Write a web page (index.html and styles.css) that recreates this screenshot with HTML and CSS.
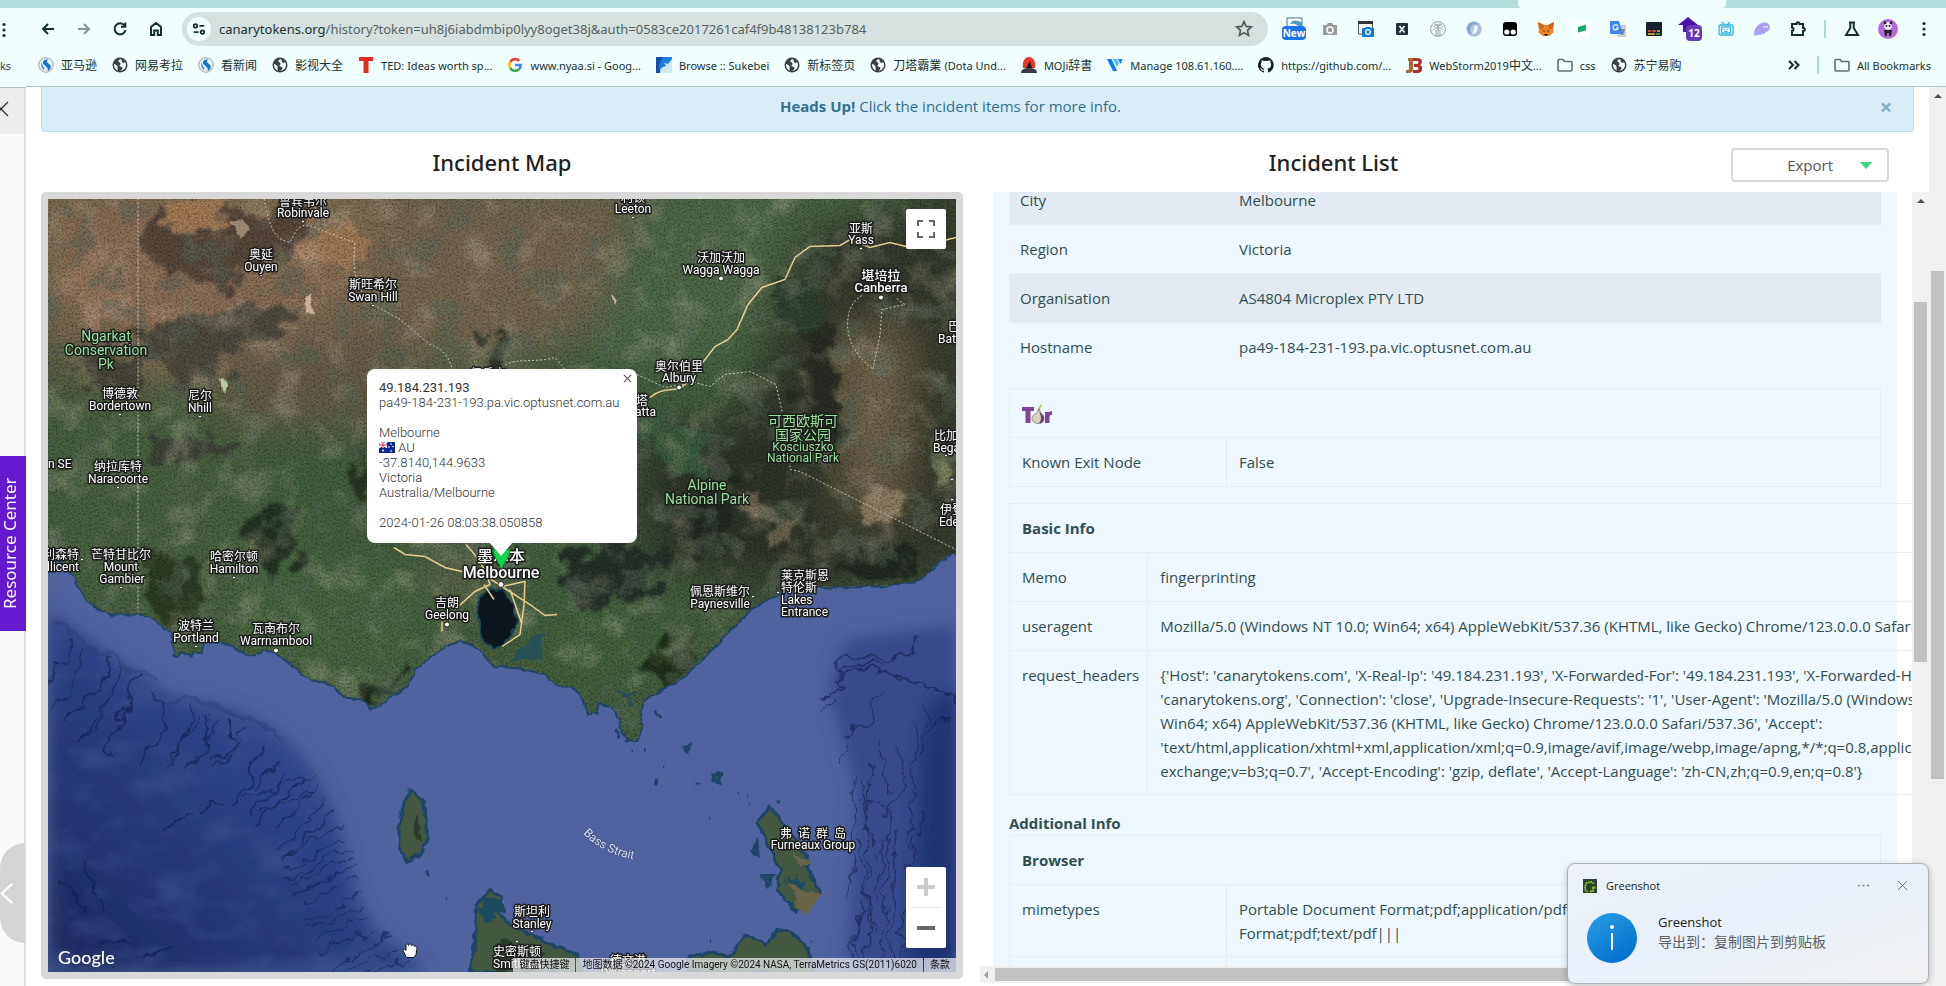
FILE: index.html
```html
<!DOCTYPE html>
<html lang="en">
<head>
<meta charset="utf-8">
<title>Canarytokens history</title>
<link rel="stylesheet" href="styles.css">
</head>
<body>
<svg class="defs" aria-hidden="true">
  <symbol id="globe" viewBox="0 0 16 16"><circle cx="8" cy="8" r="7.500" fill="#3c4043"/><path d="M9 2c-2 .5-3 1.500-2.500 2.500s2 1 2 2.200S7 8 7.500 9s3 .6 3 2-1.500 2-2 3c3-.5 5.500-3 5.500-6 0-1-.3-2-.8-2.800L11 6 10 4.500zM2 7c1 0 3 1 3.500 2.500S5 12 6 13.500C3.500 13 1.800 10 2 7z" fill="#f0fffe"/></symbol>
  <symbol id="swirl" viewBox="0 0 16 16"><circle cx="8" cy="8" r="7.300" fill="#e8f2f4" stroke="#9aa5aa"/><path d="M10 2.500C6 2 4 4.500 5.500 7S11 10 9.500 14c3-1 4-4 2.500-6S7.500 5.500 10 2.500z" fill="#1576c4"/><path d="M4 5c-1.500 2.500-.5 6.500 2 8 1-3-2.500-4-2-8z" fill="#2196d3"/></symbol>
  <symbol id="folder" viewBox="0 0 16 16"><path d="M1 3.500a1 1 0 0 1 1-1h4l1.500 2H14a1 1 0 0 1 1 1V13a1 1 0 0 1-1 1H2a1 1 0 0 1-1-1z" fill="none" stroke="#5b6f6d" stroke-width="1.600"/></symbol>
  <symbol id="dots" viewBox="0 0 16 16"><g fill="#10302e"><circle cx="8" cy="2.500" r="1.600"/><circle cx="8" cy="8" r="1.600"/><circle cx="8" cy="13.500" r="1.600"/></g></symbol>
</svg>

<aside class="peek">
  <div class="peek-chrome">
    <svg class="peek-dots"><use href="#dots"/></svg>
    <span class="peek-mark">ks</span>
  </div>
  <button class="peek-close" aria-label="Close panel"><svg viewBox="0 0 16 16"><path d="M1 1l14 14M15 1L1 15" stroke="#333" stroke-width="1.300"/></svg></button>
  <div class="peek-body">
    <button class="resource">Resource Center</button>
    <button class="peek-back" aria-label="Back"><svg viewBox="0 0 16 26"><path d="M14 2L2 13l12 11" fill="none" stroke="#fff" stroke-width="2.500"/></svg></button>
  </div>
</aside>

<div class="window">
  <header class="chrome">
    <div class="tabstrip"><span class="active-tab"></span></div>
    <nav class="toolbar">
      <button class="ico" aria-label="Back"><svg viewBox="0 0 16 16"><path d="M14 8H3M8 3L3 8l5 5" class="ln"/></svg></button>
      <button class="ico dim" aria-label="Forward"><svg viewBox="0 0 16 16"><path d="M2 8h11M8 3l5 5-5 5" class="ln"/></svg></button>
      <button class="ico" aria-label="Reload"><svg viewBox="0 0 16 16"><path d="M12.500 4.500A5.500 5.500 0 1 0 13.500 9M13.300 1.500v4.300H9" class="ln"/></svg></button>
      <button class="ico" aria-label="Home"><svg viewBox="0 0 16 16"><path d="M3 14V6l5-4 5 4v8H9.800V9.500H6.200V14z" class="ln"/></svg></button>
      <div class="omnibox">
        <button class="site" aria-label="Site information"><svg viewBox="0 0 16 16"><g class="ln"><circle cx="4" cy="4.500" r="2"/><path d="M8.500 4.500H14M2 11.500h5.500"/><circle cx="12" cy="11.500" r="2"/></g></svg></button>
        <span class="url"><b>canarytokens.org</b>/history?token=uh8j6iabdmbip0lyy8oget38j&amp;auth=0583ce2017261caf4f9b48138123b784</span>
        <button class="star" aria-label="Bookmark"><svg viewBox="0 0 16 16"><path d="M8 1.500l1.900 4.200 4.600.5-3.400 3 1 4.500L8 11.400l-4.100 2.300 1-4.500-3.400-3 4.600-.5z" fill="none" stroke="#4d5b5a" stroke-width="1.500"/></svg></button>
      </div>
      <div class="exts">
        <button class="ico" aria-label="Extension, new"><svg viewBox="0 0 24 24"><path d="M5 1h15v10H5z" fill="#fff" stroke="#2c7ba8"/><path d="M8 7c2-5 9-4 12-1v5h-3c0-3-5-5-9-4z" fill="#4b9ac6"/><rect y="9" width="24" height="14" rx="4" fill="#1a73e8"/><text x="12" y="20" class="badge">New</text></svg></button>
        <button class="ico" aria-label="Camera"><svg viewBox="0 0 16 16"><path d="M1 4h3.500L6 2h4l1.500 2H15v10H1z" fill="#9b9b9b"/><circle cx="8" cy="9" r="3" fill="none" stroke="#fff" stroke-width="1.500"/></svg></button>
        <button class="ico" aria-label="Window capture"><svg viewBox="0 0 16 16"><path d="M.5 1h14v12H.5z" fill="#f4f8f8" stroke="#555"/><path d="M0 0h15v3H0z" fill="#333"/><path d="M4 7h3l1-1h4l1 1h3v9H4z" fill="#0b7bd0"/><circle cx="10" cy="11" r="2.300" fill="none" stroke="#fff" stroke-width="1.300"/></svg></button>
        <button class="ico" aria-label="XPath"><svg viewBox="0 0 16 16"><rect x="2" y="2" width="12" height="12" rx="1" fill="#22313a"/><path d="M5.500 5l5 6.500M10.500 5l-5 6.500" stroke="#fff" stroke-width="1.600"/></svg></button>
        <button class="ico" aria-label="Palm"><svg viewBox="0 0 16 16"><g fill="none" stroke="#9a9a9a"><circle cx="8" cy="8" r="7.400"/><path d="M8 5v10M3 6c2-3 4-2 5 0 1-2 3-3 5 0M3 9.500c1-3 4-3 5-2 1-1 4-1 5 2M4.500 3.500C6 2.500 8 3 8 5c0-2 2-2.500 3.500-1.500M6 15V9M10 15V9"/></g></svg></button>
        <button class="ico" aria-label="Orbit"><svg viewBox="0 0 16 16"><circle cx="8" cy="8" r="7.700" fill="#a8bfdf"/><ellipse cx="8" cy="8" rx="3.500" ry="5" fill="#f4fbff" transform="rotate(20 8 8)"/><path d="M3 3c3-3 8-2 10 1-3-1-5 1-5 4s-2 5-4 5C1 10 0 6 3 3z" fill="#5f86c2" opacity=".45"/></svg></button>
        <button class="ico" aria-label="Monkey"><svg viewBox="0 0 16 16"><path d="M4 1h8q3 0 3 3v8q0 3-3 3H4q-3 0-3-3V4q0-3 3-3z" fill="#000"/><circle cx="4.800" cy="11" r="2.600" fill="#fff"/><circle cx="11.200" cy="11" r="2.600" fill="#fff"/></svg></button>
        <button class="ico" aria-label="Wallet fox"><svg viewBox="0 0 16 16"><path d="M0 1l6 3h4l6-3-1 6.500.5 4L11 15H5L.5 11.500l.5-4z" fill="#f08122"/><path d="M0 1l6 3-1 4-4-.5zM16 1l-6 3 1 4 4-.5z" fill="#c9651c"/><path d="M4.500 9l2.500 1-1 1zM11.500 9L9 10l1 1zM6 13h4l-1 2H7z" fill="#3b2a1e"/></svg></button>
        <button class="ico" aria-label="Green flag"><svg viewBox="0 0 16 16"><path d="M0 0h16v16H0z" fill="#fff"/><path d="M4 6l8-2.500v6L4 11.500z" fill="#12b070"/></svg></button>
        <button class="ico" aria-label="Translate"><svg viewBox="0 0 16 16"><path d="M5 4h11v12H8z" fill="#c9ced3"/><path d="M0 0h9l4 13H1a1 1 0 0 1-1-1z" fill="#4285f4"/><path d="M8 5.200a2.600 2.600 0 1 0 .2 1.800H6" fill="none" stroke="#fff" stroke-width="1.200"/><path d="M9 9h6M12 8v1.500M14 9c-.5 3-2 4-3 5M11 11l3 3" stroke="#5b6f8f" fill="none"/></svg></button>
        <button class="ico" aria-label="Keyboard"><svg viewBox="0 0 16 16"><rect y="1" width="16" height="14" rx="1" fill="#15222b"/><path d="M2 10h3M6 10h4" stroke="#e25b4b" stroke-width="1.500"/><path d="M11 10h3M2 13h7" stroke="#f0b949" stroke-width="1.500"/><path d="M10 13h4" stroke="#42b983" stroke-width="1.500"/></svg></button>
        <button class="ico" aria-label="Extension, 12"><svg viewBox="0 0 24 24"><path d="M10 0l10 8h-4v7H5V8H0z" fill="#4a12a8"/><rect x="8" y="8" width="16" height="16" rx="4" fill="#6639b7"/><text x="16" y="20" class="badge">12</text></svg></button>
        <button class="ico" aria-label="TV"><svg viewBox="0 0 16 16"><g fill="none" stroke="#33aee0" stroke-width="1.300"><rect x="1" y="4" width="14" height="10" rx="1.500"/><rect x="3.500" y="6" width="9" height="6"/><path d="M4 1l3 3M12 1L9 4M5.500 8.500l1.500-.5M9 8l1.500.5M6.500 10.500h3"/></g></svg></button>
        <button class="ico" aria-label="Phantom"><svg viewBox="0 0 16 16"><path d="M0 13C0 7 5 1.500 10.500 1.500c4 0 6 3 5 6.500-.5 2-2.500 3-3.500 2.500-1 2-2.500 3-4 2-1.500 2-3 2-3.500.8C3 15 0 15 0 13z" fill="#ab9ff2"/><path d="M10.500 5v2M13 5v2" stroke="#eefcff" stroke-width="1.200"/></svg></button>
        <button class="ico" aria-label="Extensions"><svg viewBox="0 0 16 16"><path d="M2 3h4.500c0-2.500 3-2.500 3 0H13v4c2.500 0 2.500 3 0 3v4H2v-4c2 0 2-3.500 0-3.500z" class="ln"/></svg></button>
        <span class="sep"></span>
        <button class="ico" aria-label="Labs"><svg viewBox="0 0 16 16"><path d="M5 1.500h6M6.300 2v5L2 14h12L9.700 7V2" class="ln"/></svg></button>
        <button class="ico" aria-label="Profile"><svg viewBox="0 0 20 20"><circle cx="10" cy="10" r="10" fill="#b568dc"/><circle cx="10" cy="7" r="3.800" fill="#f5f5f5"/><g fill="#222"><circle cx="7" cy="4" r="1.400"/><circle cx="13" cy="4" r="1.400"/><circle cx="8.500" cy="7" r="1"/><circle cx="11.500" cy="7" r="1"/><path d="M6 11h8l-1 6h-2v-3H9v3H7z"/></g></svg></button>
        <button class="ico" aria-label="Menu"><svg><use href="#dots"/></svg></button>
      </div>
    </nav>
    <nav class="bookmarks">
      <a href="#" class="cjk"><svg><use href="#swirl"/></svg>亚马逊</a>
      <a href="#" class="cjk"><svg><use href="#globe"/></svg>网易考拉</a>
      <a href="#" class="cjk"><svg><use href="#swirl"/></svg>看新闻</a>
      <a href="#" class="cjk"><svg><use href="#globe"/></svg>影视大全</a>
      <a href="#"><svg viewBox="0 0 16 16"><path d="M1 0h14v4h-4.500v12h-5V4H1z" fill="#e62b1e"/></svg>TED: Ideas worth sp...</a>
      <a href="#"><svg viewBox="0 0 16 16"><g fill="none" stroke-width="2.600"><path d="M12.300 3.900A5.700 5.700 0 0 0 3.200 5" stroke="#ea4335"/><path d="M3.200 5a5.700 5.700 0 0 0 0 6" stroke="#fbbc05"/><path d="M3.200 11a5.700 5.700 0 0 0 8.500 1.500" stroke="#34a853"/><path d="M11.700 12.500A5.500 5.500 0 0 0 13.700 8H8" stroke="#4285f4"/></g></svg>www.nyaa.si - Goog...</a>
      <a href="#"><svg viewBox="0 0 16 16"><path d="M0 0h16v16H0z" fill="#1c7fe0"/><path d="M4 16c0-5 2-6 6-7l-2-3 4 1 4-5v14z" fill="#cfe9fb"/><path d="M0 0h7L3 8l1 8H0z" fill="#0c4fae"/></svg>Browse :: Sukebei</a>
      <a href="#" class="cjk"><svg><use href="#globe"/></svg>新标签页</a>
      <a href="#" class="cjk"><svg><use href="#globe"/></svg><span>刀塔霸業 <span class="latin">(Dota Und...</span></span></a>
      <a href="#" class="cjk"><svg viewBox="0 0 16 16"><path d="M2 11C1 4 4 0 8 0s7 4 6 11z" fill="#e8362b"/><path d="M0 16c0-4 4-5 8-5s8 1 8 5z" fill="#3a3a46"/><path d="M5 11l4-7 2 7z" fill="#1c1c22"/></svg><span><span class="latin">MOJi</span>辞書</span></a>
      <a href="#"><svg viewBox="0 0 16 16"><path d="M0 2h4.500L10 14H6z" fill="#007bfc"/><path d="M6 2h4l2 4-2 4z" fill="#51b9ff"/><path d="M11 2h4.500l-2 5z" fill="#007bfc"/></svg>Manage 108.61.160....</a>
      <a href="#"><svg viewBox="0 0 16 16"><path d="M8 0a8 8 0 0 0-2.500 15.600c.4.100.5-.2.500-.4v-1.500c-2.200.5-2.700-1-2.700-1-.4-1-.9-1.200-.9-1.200-.7-.5.100-.5.100-.5.800.1 1.200.8 1.200.8.700 1.200 1.900.9 2.300.7.100-.5.300-.9.500-1.100-1.800-.2-3.600-.9-3.600-4 0-.9.300-1.600.8-2.100-.1-.2-.4-1 .1-2.100 0 0 .7-.2 2.200.8a7.500 7.500 0 0 1 4 0c1.500-1 2.200-.8 2.200-.8.400 1.100.2 1.900.1 2.100.5.500.8 1.200.8 2.100 0 3.100-1.900 3.800-3.700 4 .3.300.6.800.6 1.500v2.200c0 .2.100.5.500.4A8 8 0 0 0 8 0z" fill="#1b1f23"/></svg>https://github.com/...</a>
      <a href="#" class="cjk"><svg viewBox="0 0 16 16"><path d="M2 1h5v11c0 3-2 4-4 4H0v-3h2c1 0 1-1 1-2V4H2z" fill="#b0643a"/><path d="M7 1h4c6 0 6 5 3 7 4 2 3 8-3 8H7v-3h4c2 0 2-3 0-3H8V7h3c2 0 2-3 0-3H7z" fill="#a8322d"/></svg><span><span class="latin">WebStorm2019</span>中文<span class="latin">...</span></span></a>
      <a href="#"><svg><use href="#folder"/></svg>css</a>
      <a href="#" class="cjk"><svg><use href="#globe"/></svg>苏宁易购</a>
      <span class="fill"></span>
      <button class="more" aria-label="More bookmarks"><svg viewBox="0 0 16 16"><path d="M3 4l4 4-4 4M8.500 4l4 4-4 4" class="ln"/></svg></button>
      <span class="sep"></span>
      <a href="#" class="all"><svg><use href="#folder"/></svg>All Bookmarks</a>
    </nav>
  </header>

  <div class="viewport">
    <main class="page">
      <div class="alert"><p><strong>Heads Up!</strong> Click the incident items for more info.</p><button aria-label="Dismiss">×</button></div>
      <div class="columns">
        <section class="left">
          <h2>Incident Map</h2>
          <div class="map">
            <svg class="terrain" viewBox="48 199 908 774" preserveAspectRatio="xMidYMid slice">
              <defs>
                <filter id="rough" x="-5%" y="-5%" width="110%" height="110%"><feTurbulence type="fractalNoise" baseFrequency=".035" numOctaves="5" seed="4" result="n"/><feDisplacementMap in="SourceGraphic" in2="n" scale="60" xChannelSelector="R" yChannelSelector="G"/><feGaussianBlur stdDeviation="1.500"/></filter>
                <filter id="coast"><feTurbulence type="fractalNoise" baseFrequency=".12" numOctaves="2" seed="8" result="n"/><feDisplacementMap in="SourceGraphic" in2="n" scale="6" xChannelSelector="R" yChannelSelector="G"/></filter>
                <filter id="ridge" x="-5%" y="-5%" width="110%" height="110%"><feTurbulence type="fractalNoise" baseFrequency=".05" numOctaves="3" seed="8" result="n"/><feDisplacementMap in="SourceGraphic" in2="n" scale="22" xChannelSelector="R" yChannelSelector="G"/><feGaussianBlur stdDeviation=".7"/></filter>
                <filter id="soft"><feGaussianBlur stdDeviation="22"/></filter>
                <filter id="soft2"><feGaussianBlur stdDeviation="9"/></filter>
                <filter id="grain" x="0" y="0" width="100%" height="100%"><feTurbulence type="fractalNoise" baseFrequency=".5" numOctaves="3" seed="11"/><feColorMatrix values="0 0 0 0 0  0 0 0 0 0  0 0 0 0 0  2 0 0 0 -.8"/></filter>
                <filter id="grainLight" x="0" y="0" width="100%" height="100%"><feTurbulence type="fractalNoise" baseFrequency=".03" numOctaves="6" seed="31"/><feColorMatrix values="0 0 0 0 .66  0 0 0 0 .56  0 0 0 0 .42  0 3 0 0 -1.500"/></filter>
                <filter id="speck" x="0" y="0" width="100%" height="100%"><feTurbulence type="fractalNoise" baseFrequency=".03" numOctaves="6" seed="77"/><feColorMatrix values="0 0 0 0 .1  0 0 0 0 .14  0 0 0 0 .1  0 0 9 0 -5.200"/></filter>
                <filter id="sea" x="0" y="0" width="100%" height="100%"><feTurbulence type="fractalNoise" baseFrequency=".02 .035" numOctaves="4" seed="5"/><feColorMatrix values="0 0 0 0 .05  0 0 0 0 .09  0 0 0 0 .28  0 2 0 0 -.9"/></filter>
                <path id="mainland" d="M48 199H956V553C944 556 940 560 936 565 928 574 924 578 913 582 880 588 850 586 817 587 800 588 792 588 780 593 765 601 757 605 747 613L713 648 680 680 C672 686 664 686 658 691L644 700 640 712 642 728 636 740 628 742 622 730 618 716 C612 706 606 702 598 703L596 712 588 714 584 702C578 690 572 684 566 686L558 686C550 680 548 672 540 673L533 671 520 668 494 666 480 650C474 644 468 641 460 641 448 642 442 650 432 655L415 668C410 676 412 684 402 689L388 698 380 705 372 708 362 699 345 697C336 688 330 682 322 681L310 680C300 674 294 664 284 659L276 652 264 650 255 655 245 654C234 646 224 640 214 640L202 638 201 654 194 652 190 656 182 651 175 655 174 640 172 634C160 622 150 615 138 614L110 614C96 608 88 602 82 592L74 576 62 562 48 556Z"/>
                <clipPath id="land"><use href="#mainland"/></clipPath>
                <linearGradient id="deep" x1="1" y1="0" x2="0" y2="1"><stop stop-color="#3d54a0"/><stop offset=".5" stop-color="#2b4187"/><stop offset="1" stop-color="#18275a"/></linearGradient>
                <clipPath id="abyss"><path d="M48 618C90 640 110 665 155 680 170 700 215 698 252 718 300 738 325 785 340 830 350 870 360 920 385 940 400 955 415 960 430 973H48Z"/></clipPath>
              </defs>
              <rect x="48" y="199" width="908" height="774" fill="#4f639f"/>
              <path d="M48 610C90 640 120 665 155 685 170 705 215 698 252 718 300 738 325 785 340 830 350 870 360 920 385 940L430 973H48Z" fill="url(#deep)" filter="url(#soft2)"/>
              <path d="M828 690L838 660 845 640 956 625V973H846L854 860 856 790Z" fill="#35488c" filter="url(#soft2)"/>
              <path d="M935 700C910 760 930 840 905 973H956V690Z" fill="#1f3170" filter="url(#soft2)"/>
              <g clip-path="url(#abyss)"><rect x="48" y="600" width="400" height="373" filter="url(#sea)" opacity=".7"/></g>
              <g fill="none" stroke="#101c48" stroke-width="2" opacity=".6" filter="url(#ridge)"><path d="M106 660L100 690 62 725M122 668L98 728 76 742M138 675L118 720 108 755M152 700L166 705 164 735 138 772M192 712L172 763M210 715L204 755 192 765M232 722L232 745 210 765M262 745L245 790 232 803M282 762L250 790M290 772L250 815M305 778L262 820 252 824"/><path stroke-width="1.300" d="M320 785L275 830M325 800L280 850M335 812L285 860M340 824L282 862M345 840L284 872M350 850L286 880M352 858L290 885M356 868L295 895M358 880L300 905M362 895L304 922M366 905L308 930M372 915L314 940M378 928L318 955M390 935L330 973M398 948L350 973M408 958L370 973M316 790L262 812M312 774L240 800M70 640L52 690M85 650L55 710M200 718L160 770M218 722L190 770M247 730L215 770"/><path d="M190 815L160 828M225 803L200 812M90 860L100 915M60 880L85 910M100 945L130 940M145 957L170 948M110 700L80 740"/></g>
              <g fill="none" stroke="#0f1a40" stroke-width="2" opacity=".55" filter="url(#ridge)"><path d="M820 700L842 690 838 658 875 660 912 655 917 635M842 680C870 660 900 680 956 700M842 672L880 665"/><path stroke-width="1.300" d="M835 700L820 712M845 740L870 720 880 690M838 765L845 745M855 775L850 900M870 760L866 973M915 720L910 860M928 710L920 755 935 720 956 715M900 750L905 780 885 820M860 800L890 810 880 973M925 810L908 870 900 973M895 830L890 973M858 840L872 930M862 780L875 850M880 740L890 790M850 960L865 900M860 900L856 970M884 840L876 900"/></g>
              <path d="M50 622C90 640 125 668 155 684M165 702C205 697 240 712 280 740" fill="none" stroke="#1e2d60" stroke-width="6" opacity=".25" filter="url(#ridge)"/>
              <g filter="url(#coast)"><use href="#mainland" fill="none" stroke="#1d4468" stroke-width="4"/><use href="#mainland" fill="#44603f"/></g>
              <g clip-path="url(#land)">
                <g filter="url(#soft)">
                  <path d="M20 180H460L440 300 330 370 40 390Z" fill="#8b7054"/><path d="M400 180H640L620 320 500 370 380 370 340 300Z" fill="#75684f"/>
                  <path d="M640 180H920L760 360 580 370Z" fill="#4f6a48"/><path d="M230 330H400V430H210Z" fill="#675e48"/><path d="M40 330L150 340 130 380 40 400Z" fill="#5f5f45"/>
                  <path d="M800 230L980 180V580L800 600 640 560 650 440 740 410Z" fill="#353b2f"/>
                  <path d="M840 330H910L900 510H850Z" fill="#776b50"/><path d="M40 420H240L300 660 40 600Z" fill="#4b6342"/><path d="M240 560H420V680H260Z" fill="#49693f"/>
                  <path d="M640 440L800 430V560H640Z" fill="#2f352b"/><path d="M440 600H480V560H430Z" fill="#706a52"/><path d="M520 620H640V680H540Z" fill="#44663a"/>
                </g>
                <g filter="url(#rough)">
                  <path d="M150 210H300V250L230 285 150 275Z" fill="#584a3c"/><path d="M175 318L280 300 300 320 250 345 190 395 130 340Z" fill="#504c41"/>
                  <path d="M150 440L250 435 245 455 150 460Z" fill="#41443a"/><path d="M85 345L140 350 140 385 85 385Z" fill="#4a463a"/>
                  <path d="M272 490L295 510 300 550 275 580 250 540Z" fill="#283426"/><path d="M355 450L370 490 360 510Z" fill="#2c3628"/><path d="M150 545L200 570 210 625 180 635 150 600Z" fill="#2f3e28"/>
                  <path d="M410 660L380 705 360 690 385 675Z" fill="#1d2c1e"/><path d="M580 540L660 550 650 600 610 610 560 590Z" fill="#28312a"/><path d="M660 645L710 635 690 670 630 680Z" fill="#20321f"/>
                  <path d="M810 320L840 340 835 430 820 470 800 410Z" fill="#2a2f28"/><path d="M785 270L830 310 800 340 770 300Z" fill="#2f3f31"/>
                  <path d="M740 500L800 510 770 550Z" fill="#6b6350"/><path d="M925 440L955 450 940 490 920 480Z" fill="#66734b"/><path d="M700 480L730 460 720 550 690 560Z" fill="#222a23"/>
                  <path d="M300 210L370 230 360 270 310 260Z" fill="#a27a56"/><path d="M160 210L210 200 240 225 170 230Z" fill="#a57b57"/><path d="M80 260L130 270 150 320 80 330Z" fill="#97765a"/>
                  <path d="M660 400L700 450 690 480 640 430Z" fill="#3a5c40"/><path d="M480 330L520 350 510 375 490 370Z" fill="#33392d"/>
                  <path d="M880 490L910 500 900 530 870 520Z" fill="#8b7d60"/><path d="M855 540L930 560 900 585 840 580Z" fill="#232b22"/>
                </g>
                <rect x="48" y="199" width="908" height="560" filter="url(#grainLight)" opacity=".3"/>
                <rect x="48" y="199" width="908" height="560" filter="url(#speck)" opacity=".45"/>
                <rect x="48" y="199" width="908" height="560" filter="url(#grain)" opacity=".4"/>
              </g>
              <g fill="#c9b49a" filter="url(#coast)"><path d="M230 222L243 220 250 230 240 238Z" opacity=".6"/><path d="M305 298L310 294 314 314 306 314Z"/><path d="M220 377L228 384 226 394 222 390Z" fill="#b7cdaa"/><path d="M611 295L616 300 614 306Z"/></g>
              <path d="M478 600C486 590 494 586 504 592L514 606 517 624C510 640 500 650 492 648L480 638Z" fill="#0d131e" filter="url(#coast)" stroke="#1b4255" stroke-width="2"/>
              <path d="M620 690L642 695 630 702ZM528 636L544 630 542 660 514 662Z" fill="#204f5d" opacity=".8" filter="url(#ridge)"/>
              <g filter="url(#coast)" fill="#42593f" stroke="#1d4468" stroke-width="3">
                <path d="M410 790L423 800 427 823 427 843 418 856 407 862 400 850 399 830 402 810Z"/>
                <path d="M770 807L790 833 807 857 808 870 820 893 795 912 777 890 780 870 767 843 757 823Z"/>
                <path d="M470 973L475 940 477 905 490 890 503 898 498 912 508 924 532 935 550 945 577 955 583 973Z"/>
                <path d="M687 973L690 957 710 953 730 957 745 935 767 945 777 930 793 933 808 950 812 973Z"/>
                <path fill="#204f5d" d="M753 850L757 842 758 855ZM712 775L722 774 720 783 713 782ZM684 747L690 745 688 752ZM655 712L660 718ZM655 778L657 786ZM761 876L774 876 768 886ZM616 730L619 738ZM776 800L780 803ZM737 793h1M747 797h1M749 804h1M709 820h1M428 870v6M445 898h1M631 751h1M643 751h2M664 768h1M698 783v3M711 941h1M811 944h1"/>
              </g>
              <g filter="url(#ridge)"><path d="M785 885L820 895 805 910ZM790 850L810 865 800 872Z" fill="#6b654a"/><path d="M480 905L500 900 505 915 485 925ZM780 882L812 880 800 888Z" fill="#1e4c60"/><path d="M500 940L545 955 530 973 490 973ZM412 812L424 830 420 845Z" fill="#2a3b29"/></g>
              <g fill="none" stroke="#ddd6cc" stroke-width="1" stroke-dasharray="2 2" opacity=".85">
                <path d="M138 199V612M264 199C270 230 275 240 290 243 298 225 303 222 320 230L355 243C352 270 355 290 373 305L400 320 430 345C445 350 450 360 453 372M500 372C510 355 530 365 555 358L565 370M637 375L665 388 695 383 710 387 725 375 750 372 776 385 782 412M790 466V470L800 472 956 550M862 296C845 305 845 330 852 345L860 358 873 370 880 335 882 310 905 305 895 298"/>
              </g>
              <g fill="none" stroke="#e8cc8c" stroke-width="1.500"><path d="M650 398C665 385 675 395 685 385L705 360 715 347 728 340 737 330 748 305 762 288 785 280 795 258 810 247 840 246 850 240 870 248 890 243 910 248M940 242L956 238M394 548L405 555 425 557 445 568 475 575M466 545C480 560 485 570 490 585L475 592 455 610M488 578L502 587 525 582 524 605 520 635 502 647M502 587L530 605 545 616 557 615M484 585L494 600M510 590L522 625M442 622L442 632"/></g>
              <g class="lbl">
                <g class="dot"><circle cx="303" cy="222" r="1.500"/><circle cx="261" cy="276" r="1.500"/><circle cx="373" cy="306" r="1.500"/><circle cx="120" cy="415" r="1.500"/><circle cx="200" cy="417" r="1.500"/><circle cx="118" cy="488" r="1.500"/><circle cx="82" cy="560" r="1.500"/><circle cx="121" cy="588" r="1.500"/><circle cx="234" cy="578" r="1.500"/><circle cx="196" cy="647" r="1.500"/><circle cx="276" cy="651" r="2.500"/><circle cx="447" cy="625" r="2.500"/><circle cx="501" cy="585" r="3"/><circle cx="633" cy="218" r="1.500"/><circle cx="721" cy="279" r="2.500"/><circle cx="861" cy="249" r="1.500"/><circle cx="881" cy="298" r="2.500"/><circle cx="679" cy="388" r="2.500"/><circle cx="946" cy="456" r="1.500"/><circle cx="952" cy="480" r="1.500"/><circle cx="952" cy="500" r="1.500"/><circle cx="753" cy="597" r="1.500"/><circle cx="778" cy="593" r="1.500"/><circle cx="532" cy="932" r="1.500"/><circle cx="517" cy="942" r="1.500"/></g>
                <text x="303" y="206">鲁宾韦尔</text><text x="303" y="217">Robinvale</text>
                <text x="261" y="259">奥延</text><text x="261" y="271">Ouyen</text>
                <text x="373" y="289">斯旺希尔</text><text x="373" y="301">Swan Hill</text>
                <text x="120" y="398">博德敦</text><text x="120" y="410">Bordertown</text>
                <text x="200" y="400">尼尔</text><text x="200" y="412">Nhill</text>
                <text x="48" y="468" class="st">n SE</text>
                <text x="118" y="471">纳拉库特</text><text x="118" y="483">Naracoorte</text>
                <text x="79" y="559" class="en">利森特</text><text x="79" y="571" class="en">llicent</text>
                <text x="121" y="559">芒特甘比尔</text><text x="121" y="571">Mount</text><text x="122" y="583">Gambier</text>
                <text x="234" y="561">哈密尔顿</text><text x="234" y="573">Hamilton</text>
                <text x="196" y="630">波特兰</text><text x="196" y="642">Portland</text>
                <text x="276" y="633">瓦南布尔</text><text x="276" y="645">Warrnambool</text>
                <text x="447" y="607">吉朗</text><text x="447" y="619">Geelong</text>
                <text x="501" y="562" class="big">墨尔本</text><text x="501" y="578" class="big">Melbourne</text>
                <text x="488" y="378">伊丘卡</text>
                <text x="633" y="202">利顿</text><text x="633" y="213">Leeton</text>
                <text x="721" y="262">沃加沃加</text><text x="721" y="274">Wagga Wagga</text>
                <text x="861" y="233">亚斯</text><text x="861" y="244">Yass</text>
                <text x="881" y="280" class="mid">堪培拉</text><text x="881" y="292" class="mid">Canberra</text>
                <text x="948" y="331" class="st">巴</text><text x="938" y="343" class="st">Batemans</text>
                <text x="679" y="371">奥尔伯里</text><text x="679" y="382">Albury</text>
                <text x="648" y="405" class="en">旺加拉塔</text><text x="656" y="416" class="en">Wangaratta</text>
                <text x="934" y="440" class="st">比加</text><text x="933" y="452" class="st">Bega</text>
                <text x="940" y="514" class="st">伊登</text><text x="939" y="526" class="st">Eden</text>
                <text x="720" y="596">佩恩斯维尔</text><text x="720" y="608">Paynesville</text>
                <text x="781" y="580" class="st">莱克斯恩</text><text x="781" y="592" class="st">特伦斯</text><text x="781" y="604" class="st">Lakes</text><text x="781" y="616" class="st">Entrance</text>
                <text x="813" y="838">弗 &#160;诺 &#160;群 &#160;岛</text><text x="813" y="849">Furneaux Group</text>
                <text x="532" y="916">斯坦利</text><text x="532" y="928">Stanley</text>
                <text x="493" y="956" class="st">史密斯顿</text><text x="493" y="968" class="st">Smithton</text>
                <text x="628" y="965">德文港</text><text x="628" y="977">Devonport</text>
                <g class="park"><text x="106" y="341">Ngarkat</text><text x="106" y="355">Conservation</text><text x="106" y="369">Pk</text><text x="803" y="426">可西欧斯可</text><text x="803" y="440">国家公园</text><text x="803" y="451" class="sm">Kosciuszko</text><text x="803" y="462" class="sm">National Park</text><text x="707" y="490">Alpine</text><text x="707" y="504">National Park</text></g>
                <path id="strait" d="M583 834Q602 854 634 860" fill="none" stroke="none"/><text class="sea"><textPath href="#strait">Bass Strait</textPath></text>
              </g>
              <path d="M493 549L501 553 510 549C510 558 504 562 501.500 570 499 562 493 558 493 549Z" fill="#12d64f" stroke="#0a8c33"/>
              <path d="M406 957l-3-6c0-2 2-1 3 0v-5c0-2 2-2 2.500 0 .5-2 2.500-2 3 0 1-1 2.500-1 3 1 1-1 2.500 0 2.500 2l-1 6-2 3h-7z" fill="#fff" stroke="#111"/>
            </svg>
            <span class="glogo">Google</span>
            <button class="ctl full" aria-label="Full screen"><svg viewBox="0 0 18 18"><path d="M1 6V1h5M12 1h5v5M17 12v5h-5M6 17H1v-5" fill="none" stroke="#666" stroke-width="2"/></svg></button>
            <div class="ctl zoom"><button aria-label="Zoom in"><svg viewBox="0 0 18 18"><path d="M9 0v18M0 9h18" stroke="#ccc" stroke-width="4"/></svg></button><button aria-label="Zoom out"><svg viewBox="0 0 18 18"><path d="M0 9h18" stroke="#666" stroke-width="4"/></svg></button></div>
            <div class="attrib"><a href="#">键盘快捷键</a><span>地图数据 ©2024 Google Imagery ©2024 NASA, TerraMetrics GS(2011)6020</span><a href="#">条款</a></div>
            <div class="info">
              <button aria-label="Close"><svg viewBox="0 0 10 10"><path d="M1 1l8 8M9 1L1 9" stroke="#555" stroke-width="1.200"/></svg></button>
              <strong>49.184.231.193</strong><br>pa49-184-231-193.pa.vic.optusnet.com.au<br><br>Melbourne<br><svg class="flag" viewBox="0 0 16 11"><path d="M0 0h16v11H0z" fill="#10298e"/><path d="M0 0l8 5.500M8 0L0 5.500M4 0v6M0 3h8" stroke="#fff" stroke-width="2"/><path d="M4 0v6M0 3h8" stroke="#d8203a"/><g fill="#fff"><circle cx="4" cy="8.500" r="1"/><circle cx="12" cy="2" r=".8"/><circle cx="10" cy="5" r=".8"/><circle cx="14" cy="4.500" r=".8"/><circle cx="12" cy="9" r=".8"/></g></svg> AU<br>-37.8140,144.9633<br>Victoria<br>Australia/Melbourne<br><br>2024-01-26 08:03:38.050858
            </div>
          </div>
        </section>
        <section class="right">
          <div class="list-head"><h2>Incident List</h2><button class="export">Export<i></i></button></div>
          <div class="scroller">
            <div class="clip">
              <div class="card">
                <table class="striped">
                  <tr><th>City</th><td>Melbourne</td></tr>
                  <tr><th>Region</th><td>Victoria</td></tr>
                  <tr><th>Organisation</th><td>AS4804 Microplex PTY LTD</td></tr>
                  <tr><th>Hostname</th><td>pa49-184-231-193.pa.vic.optusnet.com.au</td></tr>
                </table>
                <table class="grid">
                  <tr><td colspan="2"><svg class="tor" viewBox="0 0 30 20" role="img" aria-label="Tor"><path d="M0 3h12v4H8.500v12h-5V7H0zM23 19V8h4l3-1v4c-2 0-2.500.5-2.500 2v6z" fill="#7d4698"/><path d="M16 7c0-3 1-5 4-7-1 3-2 4-2 7z" fill="#a6c532"/><path d="M16 6c1 3-6 4-6 8.500 0 3 3 5 6.500 5s5.500-2 5.500-5C22 10 17 9 18 6z" fill="#d9d3bd" stroke="#5b5a4a" stroke-width=".6"/><path d="M17 7c1 3 4 8 0 12 4 0 5-2 5-4.500C22 10 18 9 17 7z" fill="#68407f"/></svg></td></tr>
                  <tr><th>Known Exit Node</th><td>False</td></tr>
                </table>
                <table class="grid basic">
                  <tr><td colspan="2"><b>Basic Info</b></td></tr>
                  <tr><th>Memo</th><td>fingerprinting</td></tr>
                  <tr><th>useragent</th><td>Mozilla/5.0 (Windows NT 10.0; Win64; x64) AppleWebKit/537.36 (KHTML, like Gecko) Chrome/123.0.0.0 Safari/537.36</td></tr>
                  <tr><th>request_headers</th><td>{'Host': 'canarytokens.com', 'X-Real-Ip': '49.184.231.193', 'X-Forwarded-For': '49.184.231.193', 'X-Forwarded-Host':<br>'canarytokens.org', 'Connection': 'close', 'Upgrade-Insecure-Requests': '1', 'User-Agent': 'Mozilla/5.0 (Windows NT 10.0;<br>Win64; x64) AppleWebKit/537.36 (KHTML, like Gecko) Chrome/123.0.0.0 Safari/537.36', 'Accept':<br>'text/html,application/xhtml+xml,application/xml;q=0.9,image/avif,image/webp,image/apng,*/*;q=0.8,application/signed-<br>exchange;v=b3;q=0.7', 'Accept-Encoding': 'gzip, deflate', 'Accept-Language': 'zh-CN,zh;q=0.9,en;q=0.8'}</td></tr>
                </table>
                <b class="sub">Additional Info</b>
                <table class="grid">
                  <tr><td colspan="2"><b>Browser</b></td></tr>
                  <tr><th>mimetypes</th><td>Portable Document Format;pdf;application/pdf<br>Format;pdf;text/pdf|||</td></tr>
                  <tr><th>&#160;</th><td></td></tr>
                </table>
              </div>
            </div>
            <div class="vbar"><svg viewBox="0 0 8 4"><path d="M0 4l4-4 4 4z"/></svg><i></i></div>
            <div class="hbar"><svg viewBox="0 0 4 8"><path d="M4 0L0 4l4 4z"/></svg><i></i></div>
          </div>
        </section>
      </div>
    </main>
    <div class="pagebar"><svg viewBox="0 0 8 4"><path d="M0 4l4-4 4 4z"/></svg><i></i></div>
  </div>
</div>

<div class="toast">
  <div class="toast-head"><svg class="app" viewBox="0 0 14 14"><path d="M0 0h14v14H0z" fill="#333d33"/><path d="M11 4.500L8 3 3.500 4 2 7.500 2.500 11l2 2M7 12.500l3-.5V8.500h3" fill="none" stroke="#7dd321" stroke-width="1.800" stroke-dasharray="1.800 .6"/></svg><span>Greenshot</span><button aria-label="Options"><svg viewBox="0 0 12 12"><path d="M0 6h2M5 6h2M10 6h2" stroke="#777" stroke-width="1.500"/></svg></button><button aria-label="Close"><svg viewBox="0 0 12 12"><path d="M1 1l10 10M11 1L1 11" stroke="#666"/></svg></button></div>
  <div class="toast-body"><svg viewBox="0 0 50 50"><defs><linearGradient id="blue" x1="0" y1="0" x2=".6" y2="1"><stop stop-color="#27a0e6"/><stop offset="1" stop-color="#0570cf"/></linearGradient></defs><circle cx="25" cy="25" r="25" fill="url(#blue)"/><circle cx="25" cy="14" r="2" fill="#fff"/><path d="M25 20v17" stroke="#fff" stroke-width="2"/></svg><p>Greenshot<br><span>导出到：复制图片到剪贴板</span></p></div>
</div>
</body>
</html>
```

FILE: styles.css
```css
* { box-sizing: border-box; }
html, body { height: 100%; }
body { margin: 0; display: grid; grid-template-columns: 26px 1fr; overflow: hidden; font-family: "Open Sans", "Noto Sans CJK SC", sans-serif; background: #fff; }
button { font: inherit; color: inherit; border: 0; background: none; padding: 0; }
a { color: inherit; text-decoration: none; }
h2, p { margin: 0; }
svg { display: block; }
.defs { position: absolute; width: 0; height: 0; }
.ln { fill: none; stroke: #10302e; stroke-width: 2; }

.peek { display: flex; flex-direction: column; background: #fafafa; overflow: hidden; }
.peek-chrome { height: 88px; flex: none; border-top: 8px solid #b2dfdb; border-bottom: 1px solid #b0c4c3; background: #f0fffe; display: flex; flex-direction: column; }
.peek-dots { width: 16px; height: 16px; margin: 14px 0 20px -4px; }
.peek-mark { font-size: 11px; line-height: 16px; color: #24403e; }
.peek-close { height: 46px; flex: none; background: #ededf0; border-right: 2px solid #dedee3; padding-bottom: 4px; }
.peek-close svg { width: 16px; height: 16px; margin-left: -7px; }
.peek-body { flex: 1; border-right: 2px solid #dedee3; display: flex; flex-direction: column; justify-content: space-between; padding: 322px 0 43px; }
.resource { width: 26px; height: 175px; background: #6519cf; color: #fff; font: 17px/20px "Noto Sans", sans-serif; writing-mode: vertical-rl; transform: rotate(180deg); padding-left: 6px; }
.peek-back { width: 25px; height: 100px; background: #d4d4d4; border-radius: 50px 0 0 50px; }
.peek-back svg { width: 14px; height: 25px; }

.window { display: flex; flex-direction: column; min-width: 0; height: 100vh; }
.chrome { height: 87px; flex: none; background: #f0fffe; border-bottom: 1px solid #b0c8c6; display: flex; flex-direction: column; font-family: "Noto Sans", "Noto Sans CJK SC", sans-serif; font-size: 11px; color: #17322f; }
.tabstrip { height: 8px; flex: none; background: #b2dfdb; display: flex; justify-content: flex-end; padding-right: 220px; }
.active-tab { width: 208px; background: #f0fffe; border-radius: 0 0 4px 4px; }
.toolbar { display: flex; align-items: center; height: 42px; padding-left: 4px; flex: none; }
.ico { width: 36px; height: 34px; display: grid; place-items: center; flex: none; }
.ico svg { width: 16px; height: 16px; }
.ico svg[viewBox="0 0 24 24"] { width: 24px; height: 24px; }
.ico svg[viewBox="0 0 20 20"] { width: 20px; height: 20px; }
.dim { opacity: .5; }
.badge { font: 700 10px "Open Sans", sans-serif; fill: #fff; text-anchor: middle; }
.omnibox { flex: 1; height: 34px; border-radius: 17px; background: #d5e0df; margin-left: 8px; display: flex; align-items: center; min-width: 0; }
.site { width: 24px; height: 24px; border-radius: 50%; background: #f0fffe; display: grid; place-items: center; margin-left: 5px; flex: none; }
.site svg { width: 14px; height: 14px; }
.url { flex: 1; font-size: 13px; margin-left: 8px; color: #55625f; white-space: nowrap; overflow: hidden; }
.url b { font-weight: 400; color: #17322f; }
.star { margin-right: 15px; }
.star svg { width: 18px; height: 18px; }
.exts { display: flex; align-items: center; margin: 0 4px 0 8px; }
.sep { width: 2px; height: 18px; background: #a5dcd7; margin: 0 8px; flex: none; }
.bookmarks { flex: 1; display: flex; align-items: center; gap: 15px; padding: 0 15px 6px 12px; white-space: nowrap; }
.bookmarks a { display: flex; align-items: center; gap: 7px; }
.bookmarks svg { width: 16px; height: 16px; flex: none; }
.bookmarks .cjk { font-size: 12px; }
.bookmarks .latin { font-size: 11px; }
.fill { flex: 1; }
.bookmarks .sep { margin: 0; }

.viewport { flex: 1; display: flex; min-height: 0; }
.page { flex: 1; min-width: 0; display: flex; flex-direction: column; padding-left: 15px; color: #2f4f4f; font-size: 15px; line-height: 24px; }
.alert { height: 45px; flex: none; margin-right: 15px; background: #d9edf7; border: 1px solid #bcdff1; border-top: 0; border-radius: 0 0 4px 4px; color: #31708f; display: flex; align-items: center; text-align: center; padding-bottom: 6px; }
.alert p { flex: 1; }
.alert button { width: 54px; font-size: 22px; font-weight: 700; color: #83aec5; }
.columns { flex: 1; min-height: 0; display: flex; gap: 17px; }
.left { flex: 922; min-width: 0; display: flex; flex-direction: column; padding-bottom: 7px; }
.right { flex: 949; min-width: 0; display: flex; flex-direction: column; }
h2 { font-family: "Noto Sans", sans-serif; font-size: 22px; line-height: 60px; font-weight: 500; color: #222; text-align: center; flex: none; }
.list-head { display: grid; grid-template-columns: 1fr 158px; gap: 44px; padding-right: 40px; flex: none; }
.export { height: 34px; margin-top: 16px; border: 2px solid #d9d9d9; border-radius: 4px; color: #555; font-size: 15px; display: flex; justify-content: flex-end; align-items: center; gap: 27px; padding-right: 15px; background: #fff; }
.export i { border: 6px solid transparent; border-top: 7px solid #3dd67c; border-bottom: 0; }

.map { flex: 1; min-height: 0; border: 7px solid #d9d9d9; border-radius: 5px; position: relative; overflow: hidden; }
.terrain { width: 100%; height: 100%; }
.lbl text { font: 12px Roboto, "Noto Sans CJK SC", sans-serif; fill: #fff; stroke: #1c1c1c; stroke-width: 3px; stroke-linejoin: round; paint-order: stroke; text-anchor: middle; }
.lbl .st { text-anchor: start; }
.lbl .en { text-anchor: end; }
.lbl .big { font-size: 16px; font-weight: 500; }
.lbl .mid { font-size: 13px; font-weight: 500; }
.lbl .park text { font-size: 14px; fill: #97e09a; }
.lbl .park .sm { font-size: 12px; }
.lbl .sea { text-anchor: start; fill: #d8e2f5; stroke: #35456f; stroke-width: 1px; }
.dot { fill: #fff; stroke: #222; stroke-width: 1px; }
.glogo { position: absolute; left: 10px; bottom: 4px; color: #fff; font: 500 18px Lato, sans-serif; }
.ctl { position: absolute; right: 10px; width: 40px; background: #fff; border-radius: 2px; }
.ctl svg { width: 18px; height: 18px; margin: auto; }
.full { top: 10px; height: 40px; }
.zoom { bottom: 24px; padding: 0 5px; }
.zoom button { display: block; width: 30px; height: 40px; }
.zoom button + button { border-top: 1px solid #e6e6e6; height: 41px; }
.attrib { position: absolute; right: 0; bottom: 0; height: 14px; display: flex; font: 10px/14px Roboto, "Noto Sans CJK SC", sans-serif; color: #111; gap: 1px; white-space: nowrap; }
.attrib > * { background: rgba(245, 245, 245, .7); padding: 0 6px; }
.info { position: absolute; left: 319px; top: 170px; width: 270px; height: 174px; border-radius: 8px; background: #fff; padding: 11px 12px; font: 300 13px/15px Roboto, sans-serif; color: #333; white-space: nowrap; }
.info strong { font-weight: 400; }
.info::after { content: ""; position: absolute; left: 122px; top: 173px; border: 12px solid transparent; border-top: 14px solid #fff; border-bottom: 0; }
.info button { position: absolute; right: 5px; top: 5px; }
.info button svg { width: 9px; height: 9px; }
.flag { display: inline-block; width: 16px; height: 11px; vertical-align: -1px; }

.scroller { flex: 1; min-height: 0; display: grid; grid-template-columns: 1fr 17px; grid-template-rows: 1fr 17px; padding-bottom: 3px; }
.clip { overflow: hidden; min-width: 0; min-height: 0; padding: 0 15px 0 13px; }
.card { background: #eff7ff; padding: 0 16px; margin-top: -17px; height: 900px; }
table { border-collapse: collapse; width: 100%; }
th, td { text-align: left; font-weight: 400; vertical-align: top; padding: 12px 11px; height: 49px; line-height: 24px; }
th { width: 217px; }
.striped { margin-bottom: 16px; }
.striped tr { border-top: 1px solid #ebeef0; }
.striped th { width: 219px; }
.striped tr:nth-child(odd) { background: #e4eaf2; }
.grid { margin-bottom: 16px; }
.grid th, .grid td { border: 1px solid #e9edf0; padding: 12px 12px 11px; }
.basic { width: 1010px; white-space: nowrap; table-layout: auto; }
.basic th { width: 138px; }
.basic tr > th { padding-right: 8px; }
.tor { width: 30px; height: 20px; margin-top: 3px; }
.sub { display: block; line-height: 24px; }
.vbar, .pagebar { background: #f0f0f0; width: 17px; padding: 7px 2px 0; display: flex; flex-direction: column; align-items: center; }
.vbar svg, .pagebar svg { width: 8px; height: 4px; flex: none; fill: #505050; }
.vbar i { width: 13px; flex: 0 0 47%; background: #c1c1c1; margin-top: 99px; }
.pagebar i { width: 13px; flex: 0 0 57%; background: #c1c1c1; margin-top: 173px; }
.hbar { background: #f0f0f0; display: flex; align-items: center; padding-left: 4px; gap: 7px; grid-column: 1 / -1; }
.hbar svg { width: 4px; height: 8px; fill: #a0a0a0; }
.hbar i { width: 80%; height: 13px; background: #c1c1c1; }

.toast { position: absolute; right: 17px; bottom: 2px; width: 362px; height: 121px; border-radius: 8px; border: 1px solid #adb2b8; background: linear-gradient(160deg, #ecf1f8, #e8f0f9 50%, #f0f0f1); box-shadow: 0 2px 6px rgba(0, 0, 0, .25); padding: 14px 20px 0 15px; color: #1b1b1b; }
.toast-head { display: flex; align-items: center; font-size: 11px; line-height: 15px; }
.toast-head .app { width: 14px; height: 14px; margin-right: 9px; }
.toast-head span { flex: 1; }
.toast-head button { margin-left: 28px; }
.toast-head button svg { width: 11px; height: 11px; }
.toast-body { display: flex; gap: 21px; margin: 20px 0 0 4px; font-size: 13px; line-height: 19px; }
.toast-body > svg { width: 50px; height: 50px; }
.toast-body span { font-size: 14px; color: #5c5f63; }
```
